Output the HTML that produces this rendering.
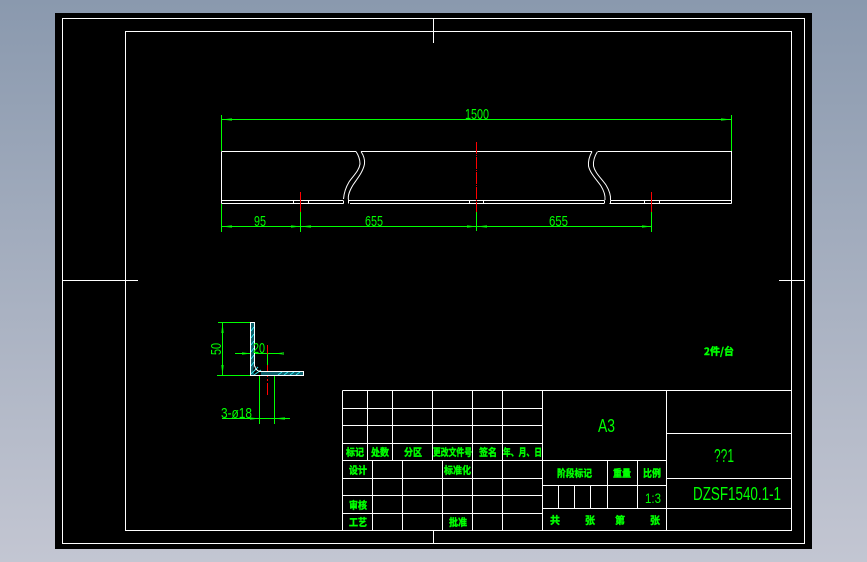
<!DOCTYPE html>
<html><head><meta charset="utf-8"><style>
html,body{margin:0;padding:0;width:867px;height:562px;overflow:hidden;background:linear-gradient(180deg,#8a99ae 0%,#c3c6d2 100%)}
svg{position:absolute;left:0;top:0}
.w{stroke:#fff;stroke-width:1;fill:none}
.g{stroke:#00ff00;stroke-width:1;fill:none}
.r{stroke:#ff0000;stroke-width:1;fill:none}
.a{fill:#0b9a0b;stroke:none}
text{fill:#00ff00}
.d{font-family:"Liberation Sans",sans-serif;font-size:15px}
.c{font-family:"Noto Sans CJK SC","WenQuanYi Zen Hei",sans-serif;font-size:10px;font-weight:700;text-anchor:start;stroke:#00ff00;stroke-width:.4px}
</style></head><body>
<svg width="867" height="562" viewBox="0 0 867 562">
<rect x="55" y="13" width="757" height="536" fill="#000"/>
<!-- arrowheads -->
<g class="a">
<path d="M223 119.500L232 118V121ZM730 119.500L721 118V121Z"/>
<path d="M223 226.500L232 225V228ZM291 225L299 226.500L291 228ZM302 226.500L311 225V228ZM467 225L475 226.500L467 228ZM478 226.500L487 225V228ZM642 225L650 226.500L642 228Z"/>
<path d="M222.500 324L221 333H224ZM222.500 374L221 365H224ZM242 352L250 353.500L242 355ZM276 353.500L284 352V355ZM250 417L258 418.500L250 420ZM275 418.500L285 417V420Z"/>
</g>
<g shape-rendering="crispEdges">
<path class="w" d="M62.5 18.5H804.5V543.5H62.5ZM125.5 31.5H791.5V530.5H125.5Z"/>
<path class="w" d="M62.5 280.5H138M779 280.5H804.5M433.5 18.5V43M433.5 530.5V543.5"/>
<!-- title block -->
<path class="w" d="M342.5 390.5H791.5M342.5 408.5H542.5M342.5 425.5H542.5M342.5 443.5H542.5M342.5 460.5H666.5M342.5 478.5H542.5M342.5 495.5H542.5M342.5 513.5H542.5"/>
<path class="w" d="M342.5 390.5V530.5M367.5 390.5V460.5M392.5 390.5V460.5M432.5 390.5V460.5M472.5 390.5V530.5M502.5 390.5V530.5M542.5 390.5V530.5"/>
<path class="w" d="M372.5 460.5V530.5M402.5 460.5V530.5M442.5 460.5V530.5"/>
<path class="w" d="M666.5 390.5V530.5M666.5 433.5H791.5M666.5 478.5H791.5M542.5 485.5H666.5M542.5 508.5H791.5M607.5 460.5V508.5M637.5 460.5V508.5M558.5 485.5V508.5M574.5 485.5V508.5M590.5 485.5V508.5"/>
<!-- top view straight lines -->
<path class="w" d="M221.5 151.5H356M361 151.5H592M598 151.5H731.5V203.5M221.5 151.5V203.5"/>
<path class="w" d="M221.5 200.5H343M348 200.5H604.5M610.5 200.5H731.5M221.5 203.5H343.5M350 203.5H604M609.5 203.5H731.5"/>
<path class="w" d="M293.5 200.5V203.5M308.5 200.5V203.5M469.5 200.5V203.5M483.5 200.5V203.5M644.5 200.5V203.5M659.5 200.5V203.5M343.5 200.5V203.5M604.5 200.5V203.5M348.5 200.5V203.5M610.5 200.5V203.5"/>
<!-- dimensions -->
<path class="g" d="M221.5 115V151M731.5 115V151M221.5 119.5H731.5M221.5 204V232M300.5 212V232M476.5 212V231M651.5 212V232M221.5 226.5H651.5"/>
<path class="r" d="M300.5 192V212M651.5 192V212"/>
<path class="r" stroke-dasharray="12 1 1 1" d="M476.5 142V212"/>
<!-- section dimensions -->
<path class="g" d="M218 322.5H250M217 375.5H250M222.5 322.5V375.5M235 353.5H282M259.5 376V424M274.5 376V424M222 418.5H290M267.5 354V365"/>
<path class="r" d="M267.5 345V354"/>
<path class="r" stroke-dasharray="12 2 2 2" d="M267.5 365V397"/>
</g>
<!-- break curves -->
<g class="w" stroke-linejoin="round">
<path d="M356 151.5C359 156 360 160 360 164C359 171 353 176 349 182C346 187 344 193 343.500 199"/>
<path d="M361 151.500C364 156 365 160 364.500 164C363 172 357 179 353 185C350 190 347.500 195 348.500 200"/>
<path d="M592 151.500C589 157 588 161 588.500 166C590 173 596 179 601 186C604 191 605.500 195 605 200"/>
<path d="M597.500 151.500C594 157 593 161 593.500 166C595 173 601 178 606 185C609 190 611 195 610.500 200"/>
</g>
<!-- section shape -->
<path d="M250.500 322.500V375.500H254V373C252 372 254 368 254 366V322.500ZM261 371.500H303V375H261Z" fill="#0b5f6b"/>
<g stroke="#33e6f0" stroke-width="1" fill="none">
<path d="M251 331L254 327M251 338L254 334M251 345L254 341M251 352L254 348M251 359L254 355M251 366L254 362M251 374L258 367M254 375L261 370M278 375L282 372M284 375L288 372M290 375L294 372M296 375L300 372"/>
</g>
<path class="w" d="M250.500 322.500H254.500V364C254.500 368 257 371.500 261 371.500H303.500V375.500H250.500Z" shape-rendering="crispEdges"/>
<!-- text -->
<g class="d">
<text x="465" y="119" textLength="24" lengthAdjust="spacingAndGlyphs">1500</text>
<text x="254" y="226" textLength="12" lengthAdjust="spacingAndGlyphs">95</text>
<text x="365" y="226" textLength="18" lengthAdjust="spacingAndGlyphs">655</text>
<text x="549" y="226" textLength="19" lengthAdjust="spacingAndGlyphs">655</text>
<text x="253" y="353" textLength="12" lengthAdjust="spacingAndGlyphs">20</text>
<text transform="translate(221,355) rotate(-90)" textLength="12" lengthAdjust="spacingAndGlyphs">50</text>
<text x="221" y="418" textLength="31" lengthAdjust="spacingAndGlyphs">3-ø18</text>
<text x="598" y="432" textLength="17" lengthAdjust="spacingAndGlyphs" style="font-size:18px">A3</text>
<text x="714" y="462" textLength="20" lengthAdjust="spacingAndGlyphs" style="font-size:18px">??1</text>
<text x="693" y="500" textLength="88" lengthAdjust="spacingAndGlyphs" style="font-size:18px">DZSF1540.1-1</text>
<text x="645" y="503" textLength="16" lengthAdjust="spacingAndGlyphs" style="font-size:14px">1:3</text>
</g>
<g class="c">
<text x="704" y="355" textLength="30" lengthAdjust="spacingAndGlyphs">2件/台</text>
<text x="346" y="456" textLength="18" lengthAdjust="spacingAndGlyphs">标记</text>
<text x="371" y="456" textLength="18" lengthAdjust="spacingAndGlyphs">处数</text>
<text x="404" y="456" textLength="18" lengthAdjust="spacingAndGlyphs">分区</text>
<text x="433" y="456" textLength="39" lengthAdjust="spacingAndGlyphs">更改文件号</text>
<text x="479" y="456" textLength="18" lengthAdjust="spacingAndGlyphs">签名</text>
<text x="503" y="456" textLength="39" lengthAdjust="spacingAndGlyphs">年、月、日</text>
<text x="349" y="474" textLength="18" lengthAdjust="spacingAndGlyphs">设计</text>
<text x="444" y="474" textLength="27" lengthAdjust="spacingAndGlyphs">标准化</text>
<text x="349" y="509" textLength="18" lengthAdjust="spacingAndGlyphs">审核</text>
<text x="349" y="526" textLength="18" lengthAdjust="spacingAndGlyphs">工艺</text>
<text x="449" y="526" textLength="18" lengthAdjust="spacingAndGlyphs">批准</text>
<text x="557" y="477" textLength="35" lengthAdjust="spacingAndGlyphs">阶段标记</text>
<text x="613" y="477" textLength="18" lengthAdjust="spacingAndGlyphs">重量</text>
<text x="643" y="477" textLength="18" lengthAdjust="spacingAndGlyphs">比例</text>
<text x="550" y="524">共</text>
<text x="585" y="524">张</text>
<text x="615" y="524">第</text>
<text x="650" y="524">张</text>
</g>
</svg>
</body></html>
